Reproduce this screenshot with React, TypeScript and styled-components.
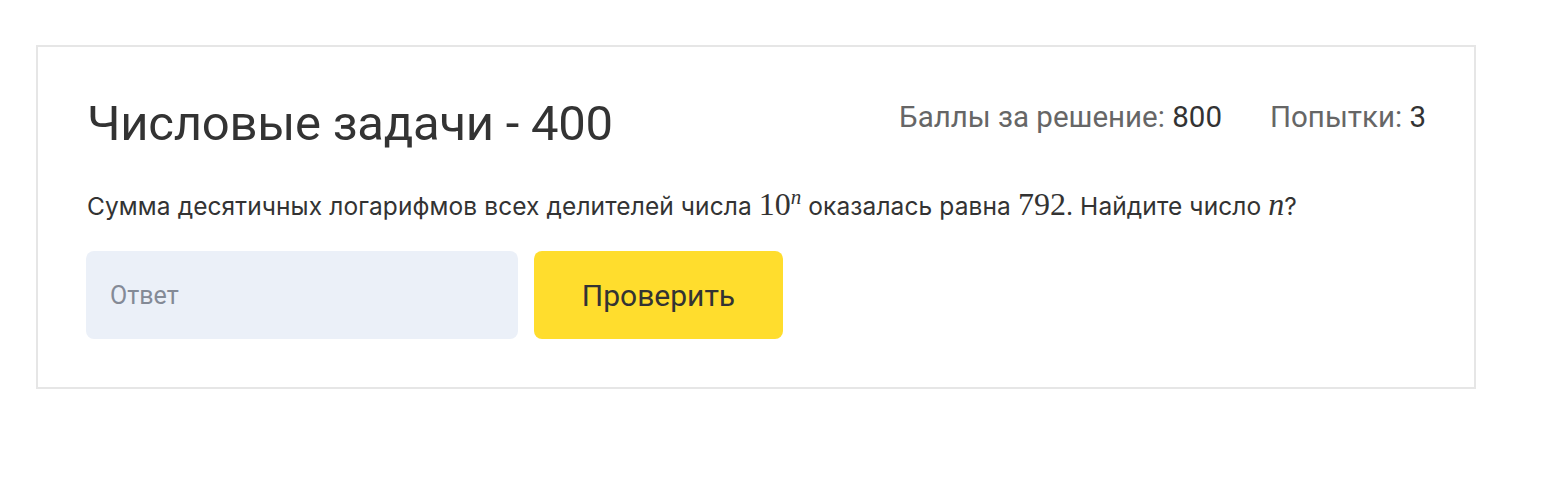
import React from "react";
import styled, { createGlobalStyle } from "styled-components";

const Global = createGlobalStyle`
  html, body { margin: 0; padding: 0; background: #fff; }
  body { font-family: Roboto, "Liberation Sans", sans-serif; color: #333; }
  * { box-sizing: border-box; }
`;

const Page = styled.div`
  padding: 45px 0 0 36px;
`;

const Card = styled.section`
  width: 1440px;
  border: 2px solid #e6e6e6;
  padding: 47px 48px 48px 48px;
  display: flex;
  flex-direction: column;
`;

const Header = styled.div`
  display: flex;
  justify-content: space-between;
  align-items: center;
`;

const Title = styled.h2`
  margin: 0 0 0 1px;
  font-weight: 400;
  font-size: 49px;
  line-height: 60px;
  color: #333;
  letter-spacing: -0.25px;
`;

const Meta = styled.div`
  display: flex;
  gap: 48px;
  font-size: 29.5px;
  line-height: 34px;
  margin-top: -14px;
`;

const MetaItem = styled.span`
  color: #666;
`;

const MetaValue = styled.span`
  color: #333;
`;

const Statement = styled.p`
  margin: 35px 0 0 1px;
  font-family: Inter, Roboto, sans-serif;
  font-size: 24.5px;
  line-height: 30px;
  letter-spacing: 0.1px;
  color: #333;
`;

const Math = styled.span<{ $italic?: boolean }>`
  font-family: "Liberation Serif", "DejaVu Serif", serif;
  font-size: 32px;
  letter-spacing: 0;
  font-style: ${(p) => (p.$italic ? "italic" : "normal")};
  sup {
    font-size: 21px;
    font-style: italic;
    vertical-align: 11px;
    line-height: 0;
  }
`;

const Controls = styled.div`
  display: flex;
  gap: 16px;
  margin-top: 30px;
`;

const Input = styled.input`
  width: 432px;
  height: 88px;
  border: none;
  border-radius: 8px;
  background: #ebf0f8;
  padding: 0 24px;
  font-family: Roboto, "Liberation Sans", sans-serif;
  font-size: 25px;
  color: #333;
  outline: none;
  &::placeholder { color: #848a96; }
`;

const Button = styled.button`
  width: 249px;
  height: 88px;
  border: none;
  border-radius: 8px;
  background: #ffdd2d;
  font-family: Roboto, "Liberation Sans", sans-serif;
  font-size: 30px;
  color: #333;
  cursor: pointer;
`;

export default function App() {
  return (
    <>
      <Global />
      <Page>
        <Card>
          <Header>
            <Title>Числовые задачи - 400</Title>
            <Meta>
              <MetaItem>
                Баллы за решение: <MetaValue>800</MetaValue>
              </MetaItem>
              <MetaItem>
                Попытки: <MetaValue>3</MetaValue>
              </MetaItem>
            </Meta>
          </Header>
          <Statement>
            Сумма десятичных логарифмов всех делителей числа{" "}
            <Math>
              10<sup>n</sup>
            </Math>{" "}
            оказалась равна <Math>792</Math>. Найдите число <Math $italic>n</Math>?
          </Statement>
          <Controls>
            <Input placeholder="Ответ" />
            <Button>Проверить</Button>
          </Controls>
        </Card>
      </Page>
    </>
  );
}
